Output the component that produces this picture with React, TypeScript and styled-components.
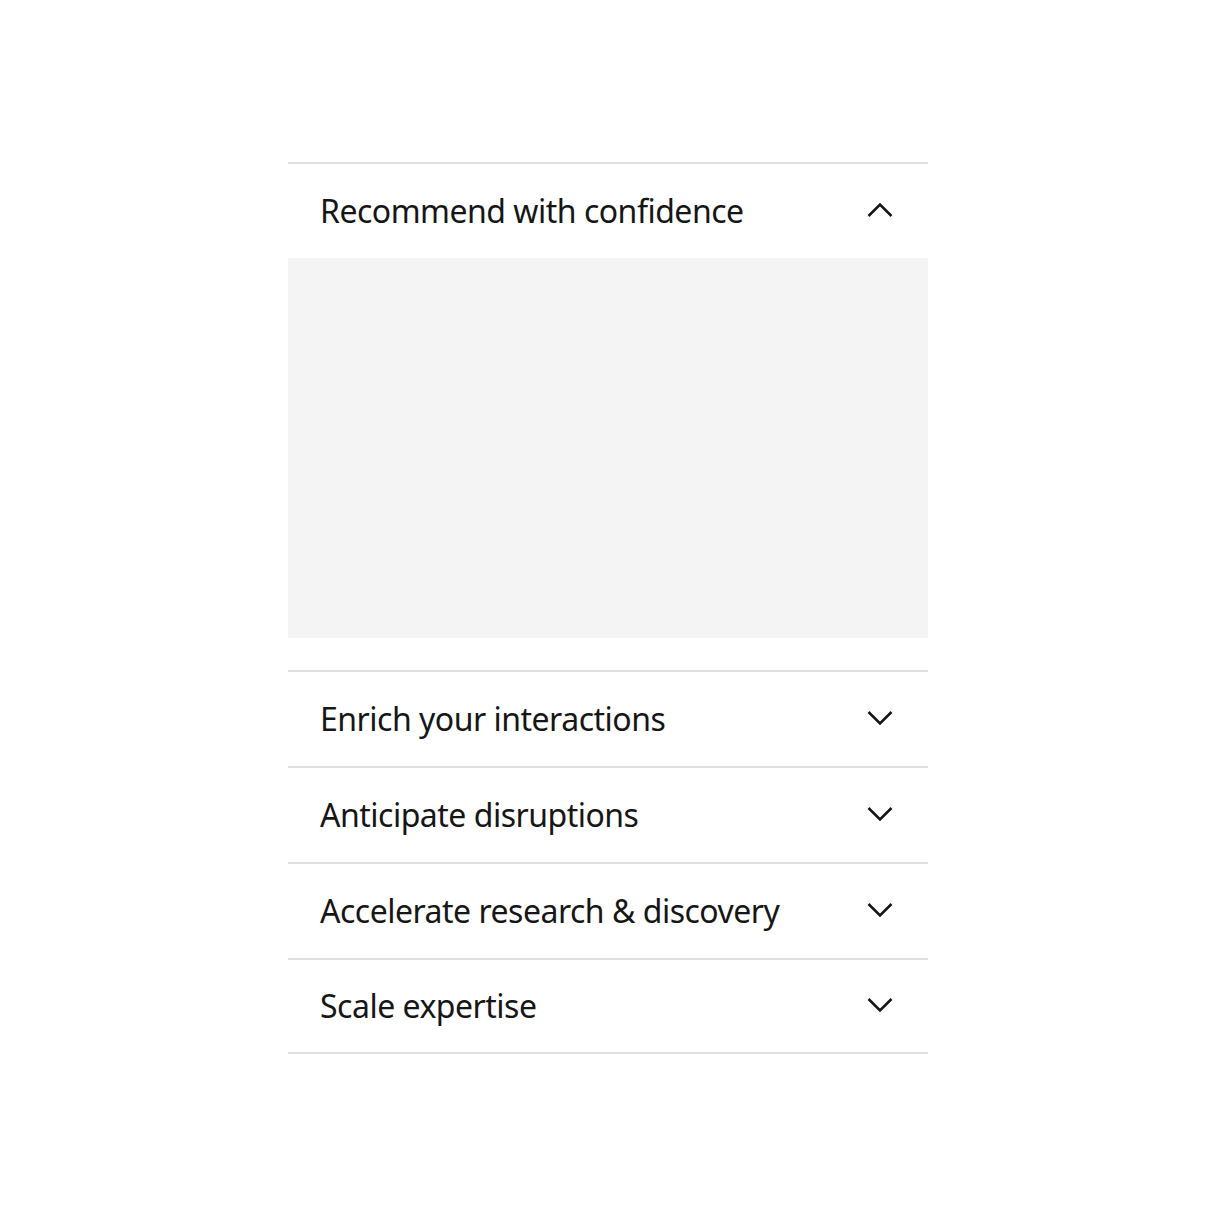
import React, { useState } from 'react';
import styled, { createGlobalStyle } from 'styled-components';

const GlobalStyle = createGlobalStyle`
  html, body {
    margin: 0;
    padding: 0;
    background: #ffffff;
  }
  body {
    font-family: "Noto Sans", "Open Sans", sans-serif;
    color: #161616;
  }
`;

const Page = styled.div`
  display: flex;
  justify-content: center;
  padding-top: 162px;
`;

const List = styled.ul`
  list-style: none;
  margin: 0;
  padding: 0;
  width: 640px;
  border-bottom: 2px solid #e0e0e0;
`;

const Item = styled.li`
  border-top: 2px solid #e0e0e0;
`;

const Header = styled.button<{ $last: boolean }>`
  display: flex;
  align-items: center;
  justify-content: space-between;
  width: 100%;
  height: ${({ $last }) => ($last ? '92px' : '94px')};
  padding: 0 32px;
  margin: 0;
  border: 0;
  background: transparent;
  cursor: pointer;
  font-family: inherit;
  color: #161616;
  text-align: left;
`;

const Title = styled.span`
  font-size: 32px;
  font-weight: 400;
  line-height: 40px;
  letter-spacing: -0.5px;
`;

const Chevron = styled.svg<{ $open: boolean }>`
  width: 32px;
  height: 32px;
  flex: none;
  margin-top: -2px;
  fill: none;
  stroke: #161616;
  stroke-width: 2.6;
  transform: rotate(${({ $open }) => ($open ? '180deg' : '0deg')});
`;

const Content = styled.div`
  padding-bottom: 32px;
`;

const Placeholder = styled.div`
  height: 380px;
  background: #f4f4f4;
`;

const items = [
  'Recommend with confidence',
  'Enrich your interactions',
  'Anticipate disruptions',
  'Accelerate research & discovery',
  'Scale expertise'
];

export default function App() {
  const [open, setOpen] = useState(0);

  return (
    <>
      <GlobalStyle />
      <Page>
        <List>
          {items.map((title, i) => (
            <Item key={title}>
              <Header
                $last={i === items.length - 1}
                onClick={() => setOpen(open === i ? -1 : i)}
              >
                <Title>{title}</Title>
                <Chevron $open={open === i} viewBox="0 0 32 32">
                  <polyline points="4.5,10 16,21.5 27.5,10" />
                </Chevron>
              </Header>
              {open === i && (
                <Content>
                  <Placeholder />
                </Content>
              )}
            </Item>
          ))}
        </List>
      </Page>
    </>
  );
}
